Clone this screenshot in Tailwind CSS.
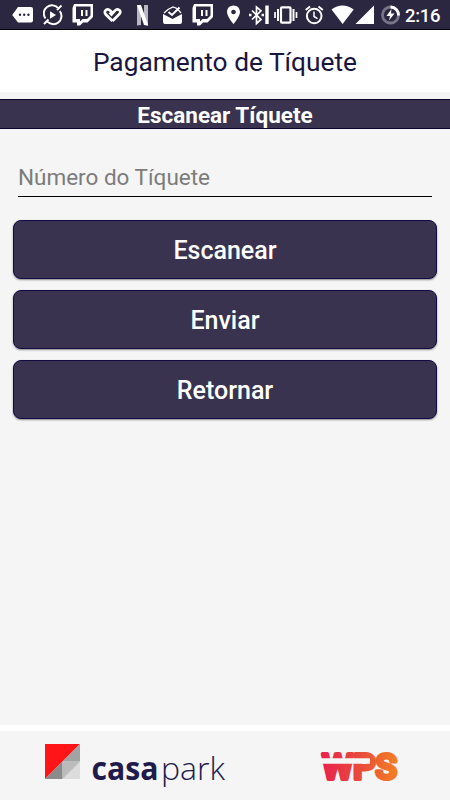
<!DOCTYPE html>
<html lang="pt-BR">
<head>
    <meta charset="UTF-8">
    <meta name="viewport" content="width=device-width, initial-scale=1.0">
    <title>Pagamento de Tíquete</title>
    <script src="https://cdn.jsdelivr.net/npm/@tailwindcss/browser@4"></script>
</head>
<body class="flex flex-col h-screen overflow-hidden bg-[#f5f5f5] font-['Roboto',sans-serif]">
    <!-- Barra de status -->
    <div class="flex shrink-0 h-[30px] bg-[#2b2740] border-b border-black text-white pl-3">
        <!-- Mensagem -->
        <svg class="w-[21px] h-[30px]" viewBox="12 0 21 30">
            <path d="M18 7H31Q33 7 33 9V20.500Q33 22.500 31 22.500H18L12.200 15Z" fill="#fff"/>
            <g fill="#2b2740"><circle cx="20" cy="14.800" r="1.200"/><circle cx="24.200" cy="14.800" r="1.200"/><circle cx="28.400" cy="14.800" r="1.200"/></g>
        </svg>
        <!-- Reproduzir -->
        <svg class="ml-2.5 w-[20px] h-[30px]" viewBox="43 0 20 30" fill="none" stroke="#fff" stroke-width="2">
            <path d="M58.500 8.500A8 8 0 0 0 45.500 18.500M47 21A8 8 0 0 0 59.800 11.200M44 24L48.500 19.500M57 10L61.500 5.500"/>
            <path d="M50 11.300V18.700L56 15Z" fill="#fff" stroke="none"/>
        </svg>
        <!-- Twitch -->
        <svg class="ml-[9px] w-[21px] h-[30px]" viewBox="72 0 21 30">
            <path fill-rule="evenodd" fill="#fff" d="M74 4H93V17L87.500 22.500H83L80 25.500H77V22.500H72.500V8ZM76 6.500V19H80V21.500L82.500 19H87L90.500 15.500V6.500Z"/>
            <path d="M82 10V16M86.500 10V16" stroke="#fff" stroke-width="2"/>
        </svg>
        <!-- Coração -->
        <svg class="ml-2.5 w-[20px] h-[30px]" viewBox="103 0 20 30" fill="none" stroke="#fff" stroke-width="2.700">
            <path d="M112.500 21L105.800 14.500C103.500 11.500 106 9 108.500 9.500C110 9.800 111 11.500 113 13.500M112.500 21L119.500 14C121.500 11 119 9 116.500 9.500C115 10 114 12 111.500 14.500L109.500 12.500"/>
        </svg>
        <!-- Netflix -->
        <svg class="ml-3.5 w-[12px] h-[30px]" viewBox="137 0 12 30">
            <path d="M137 5H141V25L137 25.500ZM144 5H148V25.500L144 25Z" fill="#b9b7c1"/>
            <path d="M137 5H141L148.300 25.500L144 25Z" fill="#fff"/>
        </svg>
        <!-- Inbox -->
        <svg class="ml-3.5 w-[20px] h-[30px]" viewBox="163 0 20 30">
            <path d="M163 14L172.500 19L182 14V22Q182 24 180 24H165Q163 24 163 22Z" fill="#fff"/>
            <path d="M164 13L168 9.500L173 7L177 8.500L181 13" stroke="#fff" stroke-width="1.300" fill="none"/>
            <path d="M168.500 12L172 15L179.500 7.500" stroke="#fff" stroke-width="2" fill="none"/>
        </svg>
        <!-- Twitch -->
        <svg class="ml-[9px] w-[21px] h-[30px]" viewBox="72 0 21 30">
            <path fill-rule="evenodd" fill="#fff" d="M74 4H93V17L87.500 22.500H83L80 25.500H77V22.500H72.500V8ZM76 6.500V19H80V21.500L82.500 19H87L90.500 15.500V6.500Z"/>
            <path d="M82 10V16M86.500 10V16" stroke="#fff" stroke-width="2"/>
        </svg>
        <!-- Localização -->
        <svg class="ml-3.5 w-[14px] h-[30px]" viewBox="227 0 14 30">
            <path fill-rule="evenodd" d="M233.500 5.500C229.700 5.500 227 8.300 227 12C227 16.500 233.500 24 233.500 24S240 16.500 240 12C240 8.300 237.300 5.500 233.500 5.500ZM233.500 9.700A2.300 2.300 0 1 1 233.490 9.700Z" fill="#fff"/>
        </svg>
        <!-- Bluetooth -->
        <svg class="ml-[7px] w-[22px] h-[30px]" viewBox="248 0 22 30" fill="none" stroke="#fff">
            <path d="M252 10.500L261 19.500L256.500 23.500V7L261 10.800L252 19.500" stroke-width="1.700"/>
            <path d="M249 15H251.500M261.500 15H264" stroke-width="2.300"/>
            <path d="M267 5.500V24" stroke-width="3.400"/>
        </svg>
        <!-- Vibrar -->
        <svg class="ml-1 w-[24px] h-[30px]" viewBox="274 0 24 30" fill="none" stroke="#fff">
            <rect x="281" y="7.300" width="9.500" height="15.400" rx="1" stroke-width="2.200"/>
            <path d="M278 9V21M293.500 9V21" stroke-width="2"/>
            <path d="M275 12V18M296.500 12V18" stroke-width="1.700"/>
        </svg>
        <!-- Alarme -->
        <svg class="ml-[7px] w-[19px] h-[30px]" viewBox="305 0 19 30" fill="none" stroke="#fff">
            <circle cx="314.200" cy="16" r="7.300" stroke-width="2"/>
            <path d="M314 11.500V16.500L317.500 18.600" stroke-width="1.500"/>
            <path d="M305.700 10L310 6.500M318.500 6.500L322.800 10" stroke-width="2"/>
        </svg>
        <!-- Wi-Fi -->
        <svg class="ml-[7px] w-[23px] h-[30px]" viewBox="331 0 23 30">
            <path d="M331.500 9.500Q342.500 1.500 353.700 9.500L342.600 24Z" fill="#fff"/>
        </svg>
        <!-- Sinal -->
        <svg class="ml-px w-[20px] h-[30px]" viewBox="355 0 20 30">
            <path d="M374 5.500V24H355.500Z" fill="#fff"/>
        </svg>
        <!-- Bateria -->
        <svg class="ml-1.5 w-[20px] h-[30px]" viewBox="381 0 20 30" fill="none">
            <circle cx="390.500" cy="15" r="8" stroke="#77748a" stroke-width="2.800"/>
            <path d="M390.500 7A8 8 0 0 1 398.500 15.500" stroke="#fff" stroke-width="2.800"/>
            <path d="M391.500 9L386.500 16H390L389 20.500L394.500 13.600H391Z" fill="#fff"/>
        </svg>
        <span class="ml-1 text-[18.500px] leading-[32px] font-medium tracking-[-0.3px]">2:16</span>
    </div>

    <!-- Título -->
    <header class="flex shrink-0 h-[62px] items-center justify-center bg-white text-[#1a1540] text-[26.300px] pt-[3px]">
        <h1>Pagamento de Tíquete</h1>
    </header>

    <h2 class="shrink-0 mt-[7px] h-[30px] bg-[#393350] border-y border-[#0b0630] text-white text-center text-[22.500px] leading-[31px] font-bold">Escanear Tíquete</h2>

    <!-- Formulário -->
    <main class="flex-1 flex flex-col px-[13px] pt-[29px]">
        <input type="text" placeholder="Número do Tíquete" class="mx-[5px] h-[39px] border-b border-black text-[22.500px] placeholder:text-[#7c7c7c] outline-none">
        <div class="mt-[23px] flex flex-col gap-[11px]">
            <button class="h-[59px] pt-[3px] rounded-[8px] bg-[#393350] border border-[#120b43] shadow-[0_1px_2px_rgba(0,0,0,0.45)] text-white text-[25px] font-medium">Escanear</button>
            <button class="h-[59px] pt-[3px] rounded-[8px] bg-[#393350] border border-[#120b43] shadow-[0_1px_2px_rgba(0,0,0,0.45)] text-white text-[25px] font-medium">Enviar</button>
            <button class="h-[59px] pt-[3px] rounded-[8px] bg-[#393350] border border-[#120b43] shadow-[0_1px_2px_rgba(0,0,0,0.45)] text-white text-[25px] font-medium">Retornar</button>
        </div>
    </main>

    <!-- Rodapé -->
    <footer class="flex shrink-0 h-[75px] border-t-6 border-white justify-between pl-[45px] pr-[50px]">
        <svg class="w-[182px] h-[69px]" viewBox="45 731 182 69">
            <path d="M45 744H80V779H45Z" fill="#dcdcdc"/>
            <path d="M45 744H80L45 779Z" fill="#ff1417"/>
            <path d="M80 744V761.500H62.500Z" fill="#a3a3a3"/>
            <path d="M62.500 761.500V779H45Z" fill="#8b8b8b"/>
            <path d="M62.500 761.500H80L62.500 779Z" fill="#bcbcbc"/>
            <text x="91.500" y="779.500" textLength="67" lengthAdjust="spacingAndGlyphs" font-family="Open Sans" font-size="32" font-weight="700" fill="#201b4b">casa</text>
            <text x="161" y="779.500" textLength="64" lengthAdjust="spacingAndGlyphs" font-family="Open Sans" font-size="32" font-weight="300" fill="#201b4b">park</text>
        </svg>
        <svg class="w-[80px] h-[69px]" viewBox="320 731 80 69">
            <defs>
                <linearGradient id="wps" gradientUnits="userSpaceOnUse" x1="320" y1="0" x2="399" y2="0">
                    <stop offset="0" stop-color="#e9204f"/>
                    <stop offset="0.500" stop-color="#e84a3c"/>
                    <stop offset="1" stop-color="#f58220"/>
                </linearGradient>
            </defs>
            <text x="322" y="778.500" textLength="75" lengthAdjust="spacingAndGlyphs" font-family="Roboto" font-size="35" font-weight="500" fill="url(#wps)" stroke="url(#wps)" stroke-width="4" stroke-linejoin="round">WPS</text>
            <path d="M320 761H370" stroke="#f5f5f5" stroke-width="5.500"/>
        </svg>
    </footer>
</body>
</html>
